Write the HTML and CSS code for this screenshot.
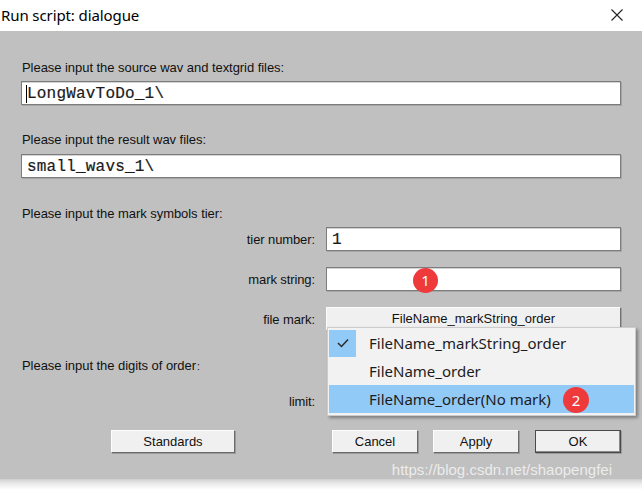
FILE: index.html
```html
<!DOCTYPE html>
<html lang="en">
<head>
<meta charset="utf-8">
<title>Run script: dialogue</title>
<link rel="stylesheet" href="styles.css">
</head>
<body>
<div class="window">
  <div class="titlebar">
    <span class="title">Run script: dialogue</span>
    <svg class="close" width="12" height="12" viewBox="0 0 12 12">
      <path d="M0.5 0.5 L11.5 11.5 M11.5 0.5 L0.5 11.5" stroke="#222" stroke-width="1.1" fill="none"/>
    </svg>
  </div>

  <div class="client">
    <p class="label l-source">Please input the source wav and textgrid files:</p>
    <div class="field f-source"><span class="mono caret">LongWavToDo_1\</span></div>

    <p class="label l-result">Please input the result wav files:</p>
    <div class="field f-result"><span class="mono">small_wavs_1\</span></div>

    <p class="label l-tier">Please input the mark symbols tier:</p>
    <div class="row r-tier">
      <span class="rlabel">tier number:</span>
      <div class="field"><span class="mono">1</span></div>
    </div>
    <div class="row r-mark">
      <span class="rlabel">mark string:</span>
      <div class="field">
        <span class="badge b-one">1</span>
      </div>
    </div>
    <div class="row r-file">
      <span class="rlabel">file mark:</span>
      <div class="optbtn">FileName_markString_order</div>
    </div>

    <p class="label l-digits">Please input the digits of order<span class="colon">:</span></p>
    <div class="row r-limit">
      <span class="rlabel">limit:</span>
      <div class="slot"></div>
    </div>

    <div class="buttons">
      <button class="btn b-standards">Standards</button>
      <button class="btn b-cancel">Cancel</button>
      <button class="btn b-apply">Apply</button>
      <button class="btn b-ok">OK</button>
    </div>

    <div class="menu">
      <div class="item checked">
        <span class="check">
          <svg width="12" height="10" viewBox="0 0 12 10">
            <path d="M1 5 L4.5 8.5 L11 1.5" stroke="#2b2b2b" stroke-width="1.5" fill="none"/>
          </svg>
        </span>
        <span class="itext">FileName_markString_order</span>
      </div>
      <div class="item">
        <span class="check"></span>
        <span class="itext">FileName_order</span>
      </div>
      <div class="item hot">
        <span class="check"></span>
        <span class="itext">FileName_order(No mark)</span>
        <span class="badge b-two">2</span>
      </div>
    </div>

    <span class="watermark">https://blog.csdn.net/shaopengfei</span>
  </div>
  <div class="shadow"></div>
</div>
</body>
</html>
```

FILE: styles.css
```css
* {
  box-sizing: border-box;
}

html, body {
  margin: 0;
  padding: 0;
  background: #ffffff;
}

body {
  width: 642px;
  height: 490px;
  overflow: hidden;
  font-family: "Liberation Sans", Arial, sans-serif;
}

.window {
  width: 642px;
  display: flex;
  flex-direction: column;
}

/* title bar */
.titlebar {
  height: 31px;
  background: #ffffff;
  display: flex;
  align-items: center;
  justify-content: space-between;
  padding: 0 19px 2px 1px;
}

.title {
  font-family: "Noto Sans", "Liberation Sans", sans-serif;
  font-size: 15px;
  color: #000;
  letter-spacing: -0.1px;
}

.close {
  display: block;
}

/* dialog body */
.client {
  position: relative;
  height: 448px;
  background: #c0c0c0;
  padding: 0 21px;
  display: flex;
  flex-direction: column;
  align-items: stretch;
}

.label {
  margin: 0;
  font-size: 13px;
  line-height: 14px;
  height: 14px;
  color: #111;
  padding-left: 1px;
  letter-spacing: -0.05px;
}

.colon {
  font-size: 10px;
  margin-left: 1px;
}

.l-source { margin-top: 30px; }
.l-result { margin-top: 28px; }
.l-tier   { margin-top: 29px; }
.l-digits { margin-top: 28px; }

.field {
  position: relative;
  height: 24px;
  background: #ffffff;
  border: 1px solid #7c7c7c;
  box-shadow: 1px 1px 0 #a6a6a6, inset 0 1px 0 #d4d4d4;
  display: flex;
  align-items: center;
  padding: 2px 0 0 5px;
}

.slot {
  height: 24px;
}

.f-source { margin-top: 6px; width: 600px; }
.f-result { margin-top: 7px; width: 600px; }

.mono {
  font-family: "Liberation Mono", "Courier New", monospace;
  font-size: 16px;
  color: #1a1a1a;
  letter-spacing: 0.2px;
  -webkit-text-stroke: 0.2px #1a1a1a;
}

.caret {
  border-left: 1px solid #000;
  margin-left: -1px;
}

.row {
  display: grid;
  grid-template-columns: 294px 295px;
  column-gap: 11px;
  align-items: center;
}

.rlabel {
  text-align: right;
  font-size: 13px;
  color: #111;
  letter-spacing: -0.1px;
}

.r-tier  { margin-top: 6px; }
.r-mark  { margin-top: 16px; }
.r-file  { margin-top: 16px; }
.r-limit { margin-top: 16px; }

.optbtn {
  height: 24px;
  background: #f0f0f0;
  border-top: 1px solid #fbfbfb;
  border-left: 1px solid #fbfbfb;
  border-right: 1px solid #707070;
  border-bottom: 1px solid #707070;
  box-shadow: 1px 1px 0 #a0a0a0;
  font-size: 13px;
  line-height: 22px;
  text-align: center;
  color: #111;
}

/* bottom button row */
.buttons {
  margin-top: 17px;
  display: flex;
  padding-left: 90px;
}

.btn {
  height: 23px;
  padding: 0;
  background: #f0f0f0;
  border-top: 1px solid #fdfdfd;
  border-left: 1px solid #fdfdfd;
  border-right: 1px solid #6a6a6a;
  border-bottom: 1px solid #6a6a6a;
  box-shadow: 1px 1px 0 #9a9a9a;
  font-family: "Liberation Sans", Arial, sans-serif;
  font-size: 13px;
  color: #111;
}

.b-standards { width: 124px; }
.b-cancel    { width: 86px; margin-left: 97px; }
.b-apply     { width: 86px; margin-left: 15px; }
.b-ok {
  width: 86px;
  margin-left: 16px;
  border: 1px solid #4a4a4a;
  box-shadow: inset -1px -1px 0 #8a8a8a, 1px 1px 0 #9a9a9a;
}

/* numbered callouts */
.badge {
  position: absolute;
  width: 25px;
  height: 25px;
  border-radius: 50%;
  background: #ee3a3a;
  color: #fff;
  font-family: "Noto Sans", "Liberation Sans", sans-serif;
  font-size: 15px;
  line-height: 25px;
  text-align: center;
}

.b-one {
  left: 86px;
  top: 0;
}

.b-two {
  left: 234px;
  top: 2px;
  width: 26px;
  height: 26px;
  line-height: 26px;
}

/* open option menu */
.menu {
  position: absolute;
  left: 327px;
  top: 296px;
  width: 309px;
  height: 89px;
  background: #f2f2f2;
  border: 1px solid #cccccc;
  box-shadow: 2px 2px 3px rgba(0, 0, 0, 0.35);
  padding: 1px 1px 0 1px;
  display: flex;
  flex-direction: column;
}

.item {
  position: relative;
  height: 28px;
  display: flex;
  align-items: center;
}

.check {
  width: 27px;
  height: 27px;
  display: flex;
  align-items: center;
  justify-content: center;
  margin-right: 13px;
}

.checked .check {
  background: #91c9f7;
}

.hot {
  background: #91c9f7;
}

.itext {
  font-family: "Noto Sans", "Liberation Sans", sans-serif;
  font-size: 15px;
  color: #1c1c1c;
  padding-bottom: 1px;
}

.watermark {
  position: absolute;
  right: 30px;
  bottom: 0;
  font-size: 15px;
  color: rgba(255, 255, 255, 0.72);
  line-height: 18px;
}

.shadow {
  height: 11px;
  background: linear-gradient(to bottom, #cfcfcf 0%, #ececec 45%, #ffffff 100%);
}
```
